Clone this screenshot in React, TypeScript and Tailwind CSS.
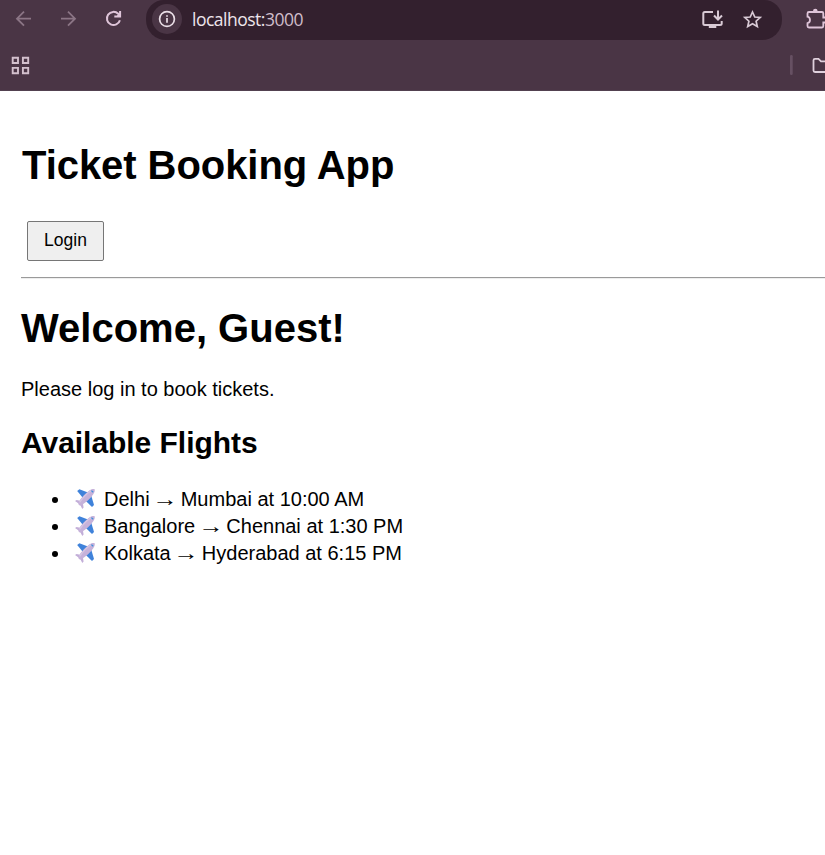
import React from "react";

const flights = [
  { from: "Delhi", to: "Mumbai", time: "10:00 AM" },
  { from: "Bangalore", to: "Chennai", time: "1:30 PM" },
  { from: "Kolkata", to: "Hyderabad", time: "6:15 PM" },
];

function Plane() {
  return (
    <svg width="22" height="22" viewBox="0 0 22 22" className="mr-[8px] mb-[2px] shrink-0" aria-hidden="true">
      <path d="M3.2 3 L5.4 1.2 L14 4.4 L9 10 Z" fill="#3f82da" />
      <path d="M17.2 7.6 L20 17 L18 19 L11.6 12.8 Z" fill="#3f82da" />
      <path d="M1 13 L2.6 11.9 L6 12.8 L9 16 L9.6 19.4 L8.3 20.9 L6 16.6 Z" fill="#c2aed8" />
      <path d="M4.6 14.5 C6.8 9.9 11.6 5 15.6 2.2 C17.6 0.8 20 0.6 20.6 1.2 C21.2 2 20.6 4.4 19.3 6.2 C16.2 10.4 11.8 14.8 7.4 17.2 C5.4 18.2 3.7 16.5 4.6 14.5 Z" fill="#c6b2da" />
      <path d="M5.6 14.4 C8.6 9.8 13 5.3 17 2.7" fill="none" stroke="#d6c7e3" strokeWidth="1.2" />
      <path d="M17.4 2.6 L19.2 4.3" stroke="#3d91df" strokeWidth="1.3" />
    </svg>
  );
}

function BrowserChrome() {
  return (
    <header className="h-[91px] w-full overflow-hidden border-b border-[#524150] bg-[#4a3545]">
      <div className="flex h-[40px] items-start">
        <svg width="146" height="40" viewBox="0 0 146 40" fill="none" className="shrink-0">
          <path d="M31 18.7H17M24 11.7L17 18.7L24 25.7" stroke="#8b7585" strokeWidth="1.8" />
          <path d="M61 18.7H75M68 11.7L75 18.7L68 25.7" stroke="#8b7585" strokeWidth="1.8" />
          <path d="M119.9 20.2A6.6 6.6 0 1 1 118.2 13.8L120 15.6" stroke="#dfc5d9" strokeWidth="2" />
          <path d="M120.1 11V16.4H114.3" stroke="#dfc5d9" strokeWidth="2" />
          <path d="M117 15.5L120 12.5V16.4H117Z" fill="#dfc5d9" />
        </svg>
        <div className="flex h-[40px] w-[636px] shrink-0 items-start rounded-b-[20px] rounded-tl-[18px] rounded-tr-[18px] bg-[#33202e] pl-[6px]">
          <div className="mt-[4px] flex size-[30px] items-center justify-center rounded-full bg-[#4a3545]">
            <svg width="18" height="18" viewBox="0 0 18 18" fill="none">
              <circle cx="9" cy="9" r="7.4" stroke="#eadfe7" strokeWidth="1.7" />
              <path d="M9 8.1V12.7M9 5.2V6.8" stroke="#eadfe7" strokeWidth="1.7" />
            </svg>
          </div>
          <div className="ml-[10px] flex-1 pt-[7px] font-['Open_Sans','Noto_Sans',sans-serif] text-[17.5px] leading-[24px] tracking-[-0.5px] whitespace-nowrap text-[#eee5ec]">
            localhost:<span className="text-[#cfbdca]">3000</span>
          </div>
          <svg width="92" height="40" viewBox="690 0 92 40" fill="none" className="shrink-0">
            <path d="M713 12H704.8Q703.3 12 703.3 13.5V23.5Q703.3 25 704.8 25H720Q721.7 25 721.7 23.5V21" stroke="#d9cad5" strokeWidth="2" />
            <path d="M708.8 25H716.3V28H708.8Z" fill="#d9cad5" />
            <path d="M718 10.5V19M714 15.5L718 19.5L722 15.5" stroke="#d9cad5" strokeWidth="2" />
            <path d="M752.5 12L754.8 17L760.2 17.5L756.1 21.2L757.3 26.6L752.5 23.8L747.7 26.6L748.9 21.2L744.8 17.5L750.2 17Z" stroke="#d9cad5" strokeWidth="1.7" />
          </svg>
        </div>
        <svg width="43" height="40" viewBox="782 0 43 40" fill="none" className="shrink-0">
          <path d="M809 12H822Q823.3 12 823.3 13.5V17.5H827M827 22.5H823.3V26Q823.3 27.5 822 27.5H809Q807.5 27.5 807.5 26V23.2Q810 22.7 810 20T807.5 16.7V13.5Q807.5 12 809 12" stroke="#dfc5d9" strokeWidth="1.8" />
          <path d="M813 12V11A2.3 2.3 0 0 1 817.6 11V12Z" fill="#dfc5d9" />
        </svg>
      </div>
      <div className="flex h-[50px] items-start justify-between">
        <svg width="40" height="50" viewBox="0 0 40 50" fill="none">
          <path d="M12.7 17.7H18V23H12.7ZM22.9 17.7H28.2V23H22.9ZM12.7 27.9H18V33.2H12.7ZM22.9 27.9H28.2V33.2H22.9Z" stroke="#d3c0cd" strokeWidth="1.9" />
        </svg>
        <svg width="45" height="50" viewBox="780 40 45 50" fill="none">
          <rect x="790" y="55" width="2.7" height="20" rx="1.3" fill="#665062" />
          <path d="M827 61.3H821L818.5 58.8H815Q813.5 58.8 813.5 60.3V70.5Q813.5 72 815 72H827" stroke="#dfd0dc" strokeWidth="1.8" />
        </svg>
      </div>
    </header>
  );
}

export default function App() {
  return (
    <div className="flex h-[855px] w-full flex-col overflow-hidden bg-white font-['Liberation_Sans',Arial,sans-serif] text-black">
      <BrowserChrome />
      <main className="pt-[51px] pl-[21px]">
        <h1 className="pl-px text-[40px] leading-[46px] font-bold tracking-[-0.06px]">Ticket Booking App</h1>
        <button className="mt-[33px] ml-[6px] flex h-[40px] w-[77px] items-center justify-center rounded-[2px] border border-[#767676] bg-[#efefef] pb-[2px] text-[17.5px] leading-[20px]">
          Login
        </button>
        <hr className="mt-[16px] h-[2px] border-t border-b border-t-[#9a9a9a] border-b-[#eeeeee]" />
        <h1 className="mt-[26px] text-[40px] leading-[46px] font-bold">Welcome, Guest!</h1>
        <p className="mt-[27px] text-[20px] leading-[23px]">Please log in to book tickets.</p>
        <h2 className="mt-[25px] text-[30px] leading-[34px] font-bold tracking-[-0.04px]">Available Flights</h2>
        <ul className="mt-[26px] text-[20px] leading-[27px]">
          {flights.map((f) => (
            <li key={f.from} className="flex h-[27px] items-center pl-[31px] whitespace-pre">
              <span className="mr-[16px] size-[6px] rounded-full bg-black" />
              <Plane />
              <span>
                {f.from} <span className="inline-block scale-x-[1.27]">→</span> {f.to} at {f.time}
              </span>
            </li>
          ))}
        </ul>
      </main>
    </div>
  );
}
